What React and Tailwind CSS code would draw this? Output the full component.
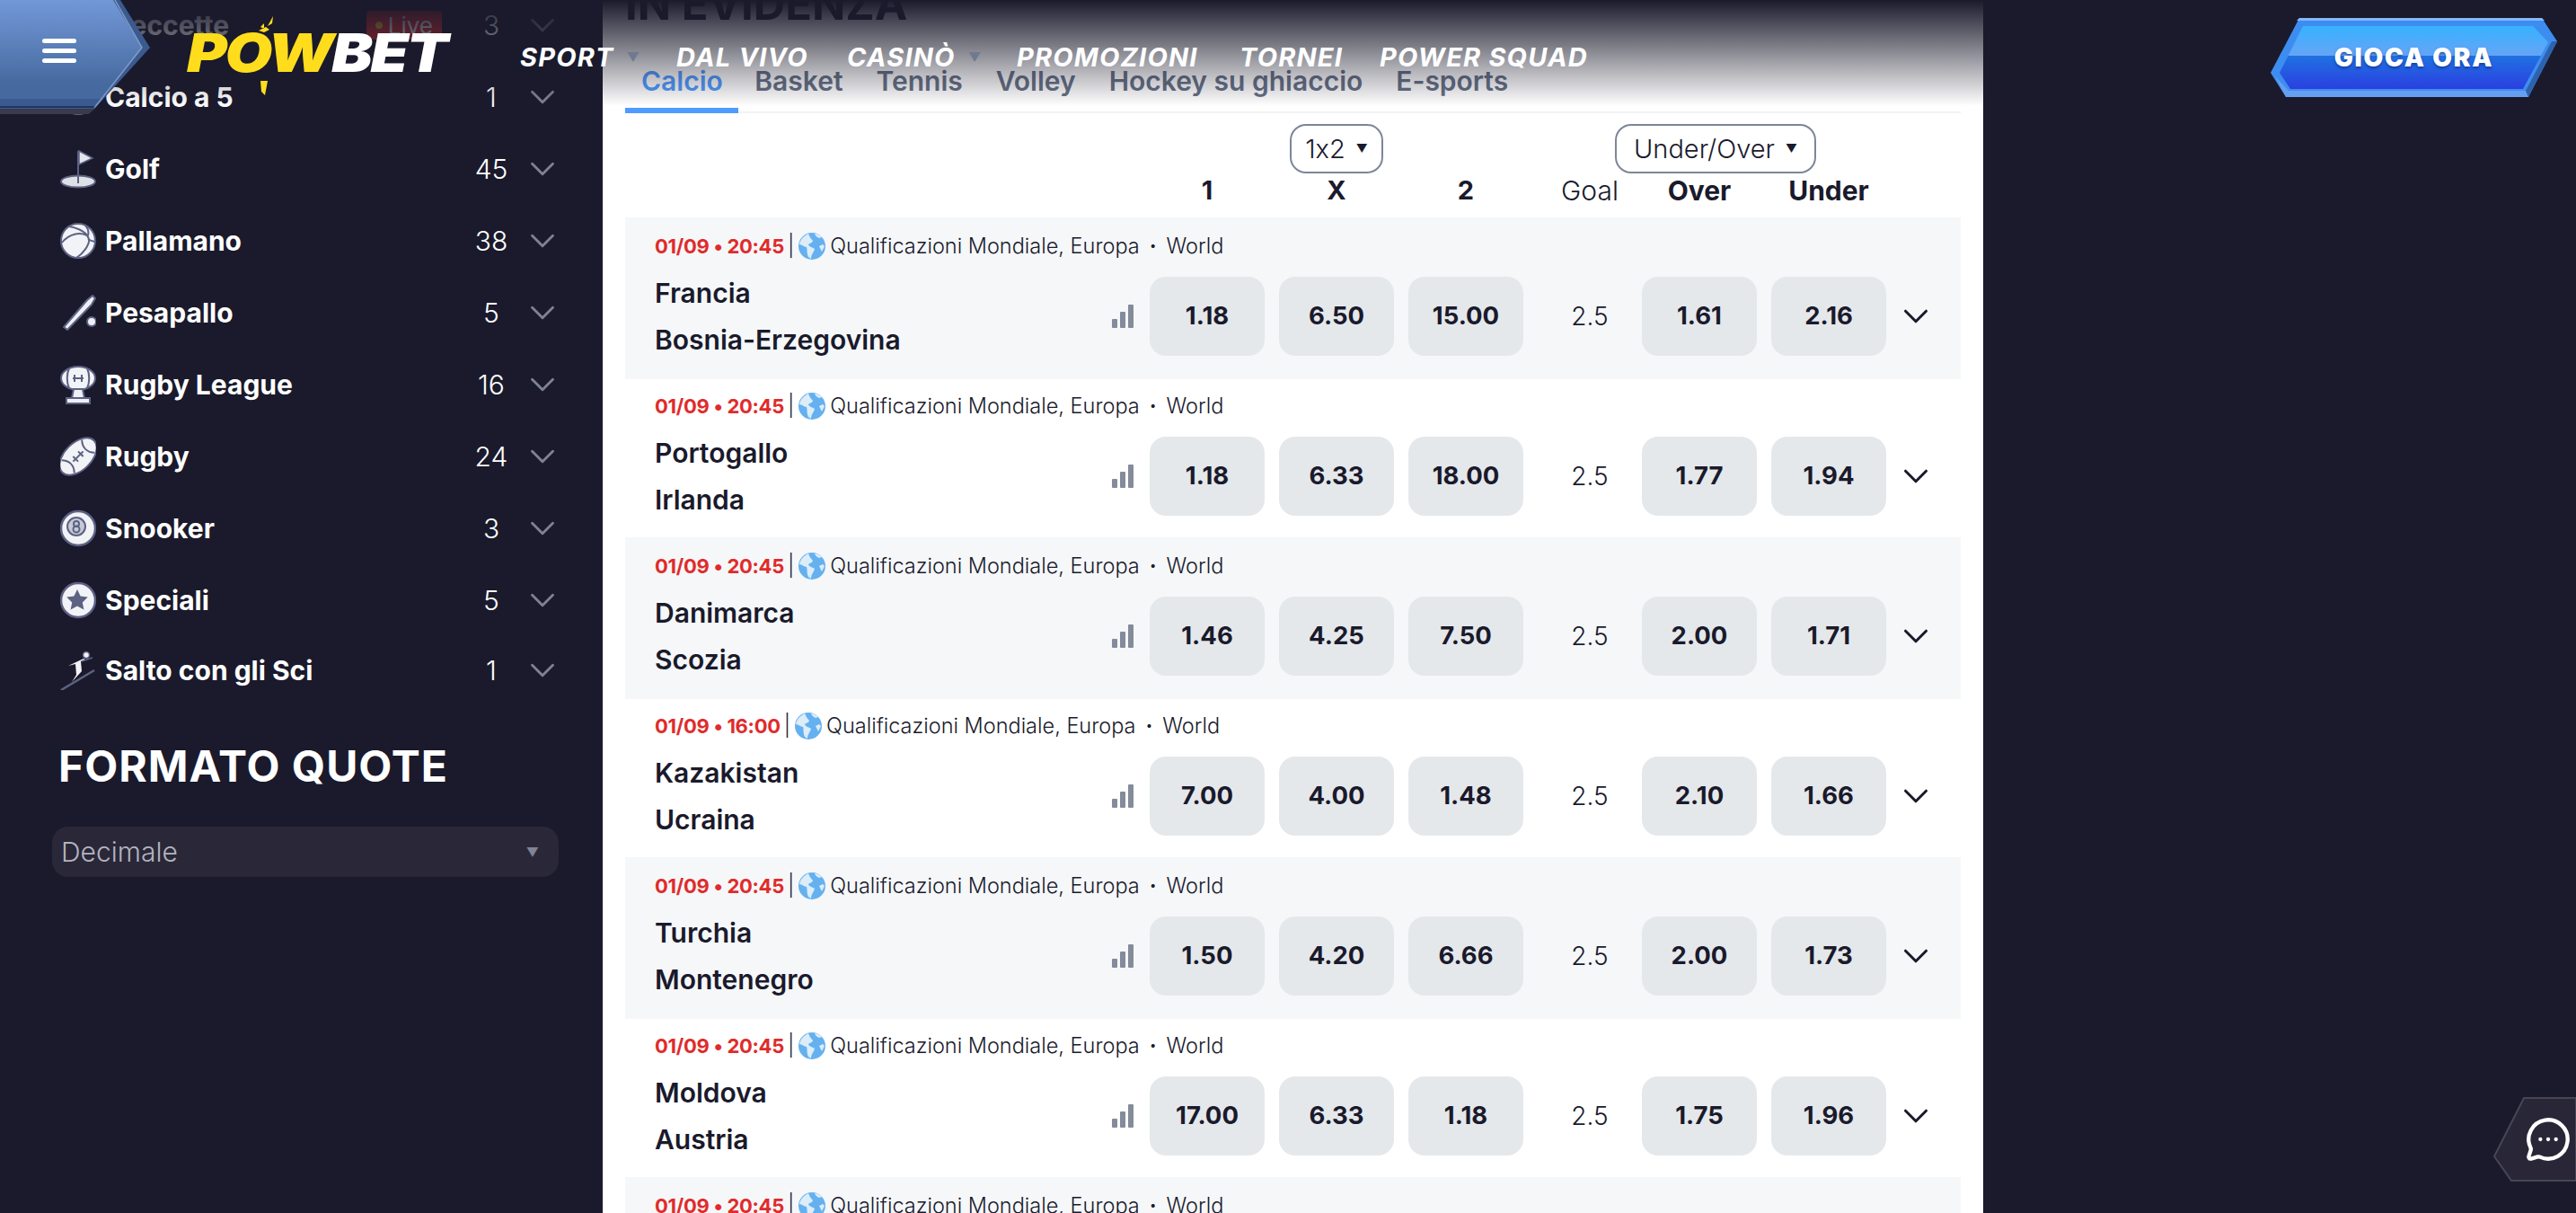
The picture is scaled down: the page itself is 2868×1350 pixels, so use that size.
import { ChevronDown, MessageCircleMore } from 'lucide-react';

const sports = [
  { name: 'Freccette', count: 3, icon: 'ball', live: true },
  { name: 'Calcio a 5', count: 1, icon: 'ball' },
  { name: 'Golf', count: 45, icon: 'golf' },
  { name: 'Pallamano', count: 38, icon: 'ball' },
  { name: 'Pesapallo', count: 5, icon: 'bat' },
  { name: 'Rugby League', count: 16, icon: 'trophy' },
  { name: 'Rugby', count: 24, icon: 'rugby' },
  { name: 'Snooker', count: 3, icon: 'snooker' },
  { name: 'Speciali', count: 5, icon: 'star' },
  { name: 'Salto con gli Sci', count: 1, icon: 'ski', short: true },
];

const matches = [
  { time: '01/09 • 20:45', home: 'Francia', away: 'Bosnia-Erzegovina', odds: ['1.18', '6.50', '15.00'], ou: ['1.61', '2.16'] },
  { time: '01/09 • 20:45', home: 'Portogallo', away: 'Irlanda', odds: ['1.18', '6.33', '18.00'], ou: ['1.77', '1.94'] },
  { time: '01/09 • 20:45', home: 'Danimarca', away: 'Scozia', odds: ['1.46', '4.25', '7.50'], ou: ['2.00', '1.71'] },
  { time: '01/09 • 16:00', home: 'Kazakistan', away: 'Ucraina', odds: ['7.00', '4.00', '1.48'], ou: ['2.10', '1.66'] },
  { time: '01/09 • 20:45', home: 'Turchia', away: 'Montenegro', odds: ['1.50', '4.20', '6.66'], ou: ['2.00', '1.73'] },
  { time: '01/09 • 20:45', home: 'Moldova', away: 'Austria', odds: ['17.00', '6.33', '1.18'], ou: ['1.75', '1.96'] },
];

const tabs = ['Calcio', 'Basket', 'Tennis', 'Volley', 'Hockey su ghiaccio', 'E-sports'];

function SportIcon({ type }) {
  const line = { stroke: '#5d6283', strokeWidth: 2, fill: 'none' };
  return (
    <svg viewBox="0 0 40 44" className="w-[40px] h-[44px] shrink-0 mr-[10px]">
      {type === 'golf' && (
        <g>
          <ellipse cx="20" cy="36" rx="19" ry="6.5" fill="#dfe1e8" stroke="#5d6283" strokeWidth="2" />
          <path d="M20 2V38" {...line} />
          <path d="M21 2l15 8-15 7z" fill="#e4e6ee" stroke="#5d6283" strokeWidth="1.5" />
        </g>
      )}
      {type === 'ball' && (
        <g>
          <circle cx="20" cy="22" r="19" fill="#f2f3f7" stroke="#5d6283" strokeWidth="2" />
          <path d="M2 24C10 14 22 12 30 16M10 6c10 2 20 6 22 14 1 6-6 16-14 21M28 5c3 3 4 7 3 11M31 20c3 2 6 3 8 3" {...line} />
        </g>
      )}
      {type === 'bat' && (
        <g>
          <path d="M4 38L30 8l6-5 3 3-4 7-27 28z" fill="#eef0f5" stroke="#5d6283" strokeWidth="2" strokeLinejoin="round" />
          <circle cx="35" cy="32" r="5" fill="#eef0f5" stroke="#5d6283" strokeWidth="2" />
        </g>
      )}
      {type === 'trophy' && (
        <g>
          <ellipse cx="20" cy="15" rx="19" ry="13" fill="#f2f3f7" stroke="#5d6283" strokeWidth="2" />
          <path d="M10 4c-3 6-3 16 0 22M30 4c3 6 3 16 0 22M14 15h12M16 11v8M24 11v8" {...line} />
          <path d="M15 27h10l2 10H13z" fill="#eef0f5" stroke="#5d6283" strokeWidth="2" />
          <rect x="7" y="37" width="26" height="6" fill="#eef0f5" stroke="#5d6283" strokeWidth="2" />
        </g>
      )}
      {type === 'rugby' && (
        <g transform="rotate(-45 20 22)">
          <ellipse cx="20" cy="22" rx="25" ry="15" fill="#f2f3f7" stroke="#5d6283" strokeWidth="2" />
          <path d="M4 12c6 6 6 14 0 20M36 12c-6 6-6 14 0 20M12 22h16M16 18v8M24 18v8" {...line} />
        </g>
      )}
      {type === 'snooker' && (
        <g>
          <circle cx="20" cy="22" r="19" fill="#f2f3f7" stroke="#5d6283" strokeWidth="2.5" />
          <circle cx="18" cy="20" r="10" fill="#c6c9d6" stroke="#5d6283" strokeWidth="2" />
          <circle cx="18" cy="17" r="3" {...line} />
          <circle cx="18" cy="23" r="3.5" {...line} />
        </g>
      )}
      {type === 'star' && (
        <g>
          <circle cx="20" cy="22" r="19" fill="#f2f3f7" stroke="#5d6283" strokeWidth="2.5" />
          <path d="M19 10l3.6 7.6 8.2 1-6 5.8 1.6 8.2L19 28.6l-7.4 4 1.6-8.2-6-5.8 8.2-1z" fill="#5d6283" />
        </g>
      )}
      {type === 'ski' && (
        <g>
          <circle cx="29" cy="5" r="3.5" fill="#f2f3f7" stroke="#5d6283" strokeWidth="1.5" />
          <path d="M26 9L9 17l8-2 1 12-5 8 11-12-1-11 5-2z" fill="#f2f3f7" />
          <path d="M1 44L38 22" stroke="#5d6283" strokeWidth="2.5" />
          <path d="M24 12l12-4" stroke="#5d6283" strokeWidth="1.5" />
        </g>
      )}
    </svg>
  );
}

function SportRow({ sport }) {
  return (
    <div className={sport.short ? 'flex items-center h-[76px] pl-[67px] pr-[44px]' : 'flex items-center h-[80px] pl-[67px] pr-[44px]'}>
      <SportIcon type={sport.icon} />
      <span className="text-[30px] font-bold text-white whitespace-nowrap">{sport.name}</span>
      <div className="flex-1 flex justify-end pr-[30px]">
        {sport.live && (
          <span className="flex items-center gap-[6px] rounded-[4px] bg-[#e02b2b] px-[10px] h-[32px] text-[26px] text-white">
            <span className="w-[8px] h-[8px] rounded-full bg-[#f5c518]" />
            Live
          </span>
        )}
      </div>
      <span className="w-[50px] text-center text-[30px] font-light text-white">{sport.count}</span>
      <ChevronDown className="ml-[9px] w-[46px] h-[46px] text-[#7d8294]" strokeWidth={1.5} />
    </div>
  );
}

function Sidebar() {
  return (
    <aside className="w-[671px] shrink-0 -mt-[12px]">
      {sports.map((s) => (
        <SportRow key={s.name} sport={s} />
      ))}
      <h2 className="ml-[65px] mt-[41px] text-[48px] leading-[56px] tracking-[1px] font-bold text-white">FORMATO QUOTE</h2>
      <div className="ml-[58px] mt-[39px] w-[564px] h-[56px] rounded-[18px] bg-[#2a2838] flex items-center justify-between pl-[10px] pr-[22px]">
        <span className="text-[30px] font-light text-[#b4b4bf]">Decimale</span>
        <span className="text-[14px] text-[#7f8496]">▼</span>
      </div>
    </aside>
  );
}

function Globe() {
  return (
    <svg viewBox="0 0 30 30" className="w-[30px] h-[30px] mx-[5px] shrink-0">
      <circle cx="15" cy="15" r="15" fill="#65b1f0" />
      <path d="M11 1c-4 2-9 6-10 12 3 0 5 3 8 3 1 3 0 7 2 11l3 2c0-5 3-7 4-11-3-2-6-2-7-5 2-2 4-1 5-4-2-2-4-5-5-8zM18 1c1 3 3 4 5 5l3-1c-2-2-5-4-8-4zM23 15l3 6 3-6-2-2z" fill="#dcecf9" />
    </svg>
  );
}

function Meta({ time }) {
  return (
    <div className="flex items-center h-[24px] text-[23.5px] text-[#1a1a2c] whitespace-nowrap">
      <span className="text-[22px] tracking-[-0.3px] font-bold text-[#e02b2b]">{time}</span>
      <span className="ml-[4px] font-light">|</span>
      <Globe />
      <span className="font-light">Qualificazioni Mondiale, Europa</span>
      <span className="mx-[11px] font-bold">·</span>
      <span className="font-light">World</span>
    </div>
  );
}

function OddsButton({ value }) {
  return (
    <button className="w-[128px] h-[88px] rounded-[18px] bg-[#e5e8eb] text-[27.5px] font-bold text-[#1a1a2c]">
      {value}
    </button>
  );
}

function MatchRow({ match, shaded }) {
  return (
    <div className={shaded ? 'flex h-[180px] bg-[#f5f7f9] pt-[20px]' : 'flex h-[176px] bg-white pt-[18px]'}>
      <div className="w-[584px] pl-[33px] flex flex-col">
        <Meta time={match.time} />
        <div className="flex items-center mt-[14px]">
          <div className="flex-1 text-[30px] leading-[52px] font-semibold text-[#1a1a2c]">
            <div>{match.home}</div>
            <div>{match.away}</div>
          </div>
          <svg viewBox="0 0 24 26" className="w-[24px] h-[26px] mr-[18px]">
            <rect x="0" y="16" width="6" height="10" rx="1" fill="#848b9a" />
            <rect x="9" y="8" width="6" height="18" rx="1" fill="#848b9a" />
            <rect x="18" y="0" width="6" height="26" rx="1" fill="#848b9a" />
          </svg>
        </div>
      </div>
      <div className="flex items-start mt-[46px] gap-[16px]">
        {match.odds.map((o, i) => (
          <OddsButton key={i} value={o} />
        ))}
      </div>
      <div className="flex items-start mt-[46px]">
        <div className="w-[132px] h-[88px] flex items-center justify-center pl-[16px] text-[28px] font-light text-[#1a1a2c]">2.5</div>
        <div className="flex gap-[16px]">
          {match.ou.map((o, i) => (
            <OddsButton key={i} value={o} />
          ))}
        </div>
        <div className="h-[88px] flex items-center ml-[10px]">
          <ChevronDown className="w-[46px] h-[46px] text-[#1a1a2c]" strokeWidth={1.6} />
        </div>
      </div>
    </div>
  );
}

function Select({ label, className }) {
  return (
    <div className={`h-[55px] rounded-[18px] border-2 border-[#7d8699] flex items-center justify-center gap-[12px] text-[29px] font-light text-[#1a1a2c] [font-feature-settings:'calt'_0] ${className}`}>
      {label}
      <span className="text-[13px]">▼</span>
    </div>
  );
}

function MarketHeader() {
  return (
    <div className="flex h-[116px] pt-[12px] text-[#1a1a2c]">
      <div className="w-[584px]" />
      <div className="w-[416px] flex flex-col items-center">
        <Select label="1x2" className="w-[104px]" />
        <div className="w-full flex h-[38px] items-center text-[29px] font-bold">
          <span className="w-[128px] text-center">1</span>
          <span className="w-[128px] mx-[16px] text-center">X</span>
          <span className="w-[128px] text-center">2</span>
        </div>
      </div>
      <div className="w-[404px] flex flex-col">
        <Select label="Under/Over" className="w-[224px] ml-[102px]" />
        <div className="flex h-[38px] items-center text-[30px]">
          <span className="w-[132px] text-center pl-[16px] font-light">Goal</span>
          <span className="w-[128px] text-center font-bold">Over</span>
          <span className="w-[128px] ml-[16px] text-center font-bold">Under</span>
        </div>
      </div>
    </div>
  );
}

function Main() {
  return (
    <main className="w-[1537px] shrink-0 bg-white px-[25px]">
      <h1 className="-mt-[19px] h-[48px] text-[49px] leading-[48px] font-bold text-[#1a1a2c]">IN EVIDENZA</h1>
      <div className="flex h-[97px] border-b-[2px] border-[#f1f2f4]">
        {tabs.map((t, i) => (
          <div
            key={t}
            className={
              i === 0
                ? 'h-[97px] pl-[18px] pr-[17px] pt-[45px] border-b-[6px] border-[#4e9bff] text-[30px] leading-[32px] font-semibold text-[#4e9bff]'
                : 'h-[97px] px-[18.5px] pt-[45px] text-[30px] leading-[32px] font-semibold text-[#667085]'
            }
          >
            {t}
          </div>
        ))}
      </div>
      <MarketHeader />
      {matches.map((m, i) => (
        <MatchRow key={i} match={m} shaded={i % 2 === 0} />
      ))}
      <div className="h-[180px] bg-[#f5f7f9] pt-[20px] pl-[33px]">
        <Meta time="01/09 • 20:45" />
      </div>
    </main>
  );
}

function MenuHex() {
  return (
    <div className="relative w-[167px] h-[127px] shrink-0">
      <svg viewBox="0 0 167 127" className="w-[167px] h-[127px]">
        <defs>
          <linearGradient id="hexFill" x1="0" y1="0" x2="0" y2="1">
            <stop offset="0" stopColor="#7398d8" />
            <stop offset="0.85" stopColor="#466a9f" />
          </linearGradient>
        </defs>
        <polygon points="0,127 98,127 108,118 167,53 134,0 0,0" fill="#3a5a90" />
        <polygon points="0,110 112,110 158,53 126,0 0,0" fill="url(#hexFill)" />
        <polygon points="0,120 105,120 108,118 0,118" fill="#1f3560" />
        <polygon points="0,121 106,121 98,127 0,127" fill="#3a3a4c" />
        <path d="M128 0L158 53L105 120" fill="none" stroke="#9db3d8" strokeWidth="1.5" opacity="0.7" />
      </svg>
      <div className="absolute left-[47px] top-[43px] w-[38px] flex flex-col gap-[6px]">
        <span className="h-[5px] rounded-full bg-white" />
        <span className="h-[5px] rounded-full bg-white" />
        <span className="h-[5px] rounded-full bg-white" />
      </div>
    </div>
  );
}

function Logo() {
  return (
    <div className="relative ml-[41px] mt-[26px] w-[291px] h-[66px] shrink-0">
      <div className="flex origin-left scale-x-[1.155] text-[59px] leading-[66px] font-black italic tracking-[-2px]">
        <span className="text-[#ffdd1c]">POW</span>
        <span className="text-white">BET</span>
      </div>
      <svg viewBox="0 0 60 90" className="absolute left-[62px] -top-[8px] w-[60px] h-[90px]">
        <path d="M34 0l-6 11 5-3zM24 8l-4 4 4 2zM18 16l8-4 4 3-6 3z" fill="#ffdd1c" />
        <path d="M20 72l8 0-3 16-4-4z" fill="#ffdd1c" />
      </svg>
    </div>
  );
}

function NavLink({ label, caret, className }) {
  return (
    <span className={`flex items-center text-[29px] leading-[36px] tracking-[1.2px] font-bold italic text-white whitespace-nowrap ${className}`}>
      {label}
      {caret && <span className="ml-[14px] text-[14px] not-italic text-[#6f7a8f]">▼</span>}
    </span>
  );
}

function PlayButton() {
  return (
    <div className="relative w-[319px] h-[88px]">
      <svg viewBox="0 0 319 88" className="absolute inset-0 w-[319px] h-[88px]">
        <defs>
          <linearGradient id="playFill" x1="0" y1="0" x2="0" y2="1">
            <stop offset="0" stopColor="#36b2ff" />
            <stop offset="0.47" stopColor="#66a4f6" />
            <stop offset="0.47" stopColor="#1f72e2" />
            <stop offset="1" stopColor="#2b3fe0" />
          </linearGradient>
        </defs>
        <polygon points="32,0 302,0 319,26 287,88 17,88 0,61" fill="#3d8df0" />
        <polygon points="32,0 302,0 305,3 29,3" fill="#85b7f8" />
        <polygon points="5,65 20,81 284,81 287,88 17,88" fill="#659ff0" />
        <polygon points="287,88 284,81 313,26 319,26" fill="#2f62ad" />
        <polygon points="36,9 292,9 309,27 281,79 22,79 10,61" fill="url(#playFill)" />
      </svg>
      <span className="absolute inset-0 flex items-center justify-center text-[28px] tracking-[1.8px] font-black text-white [text-shadow:0_2px_3px_rgba(10,40,120,0.6)]">
        GIOCA ORA
      </span>
    </div>
  );
}

function Header() {
  return (
    <header className="absolute inset-x-0 top-0 h-[118px] bg-gradient-to-b from-[#1a1a2c] to-transparent flex items-start">
      <MenuHex />
      <Logo />
      <nav className="flex items-start mt-[46px] ml-[80px]">
        <NavLink label="SPORT" caret className="w-[174px]" />
        <NavLink label="DAL VIVO" className="w-[190px]" />
        <NavLink label="CASINÒ" caret className="w-[189px]" />
        <NavLink label="PROMOZIONI" className="w-[248px]" />
        <NavLink label="TORNEI" className="w-[156px]" />
        <NavLink label="POWER SQUAD" />
      </nav>
      <div className="ml-auto mt-[20px] mr-[21px]">
        <PlayButton />
      </div>
    </header>
  );
}

function ChatButton() {
  return (
    <div className="absolute right-0 top-[1221px] w-[92px] h-[94px]">
      <svg viewBox="0 0 92 94" className="absolute inset-0 w-[92px] h-[94px]">
        <polygon points="92,1 34,1 1,66 20,93 92,93" fill="#292737" stroke="#464656" strokeWidth="2" />
      </svg>
      <MessageCircleMore className="absolute left-[35px] top-[21px] w-[52px] h-[52px] text-white" strokeWidth={2} />
    </div>
  );
}

export default function App() {
  return (
    <div className="relative flex h-[1350px] w-[2868px] overflow-hidden bg-[#1a1a2c] font-['Inter',sans-serif]">
      <Sidebar />
      <Main />
      <Header />
      <ChatButton />
    </div>
  );
}
